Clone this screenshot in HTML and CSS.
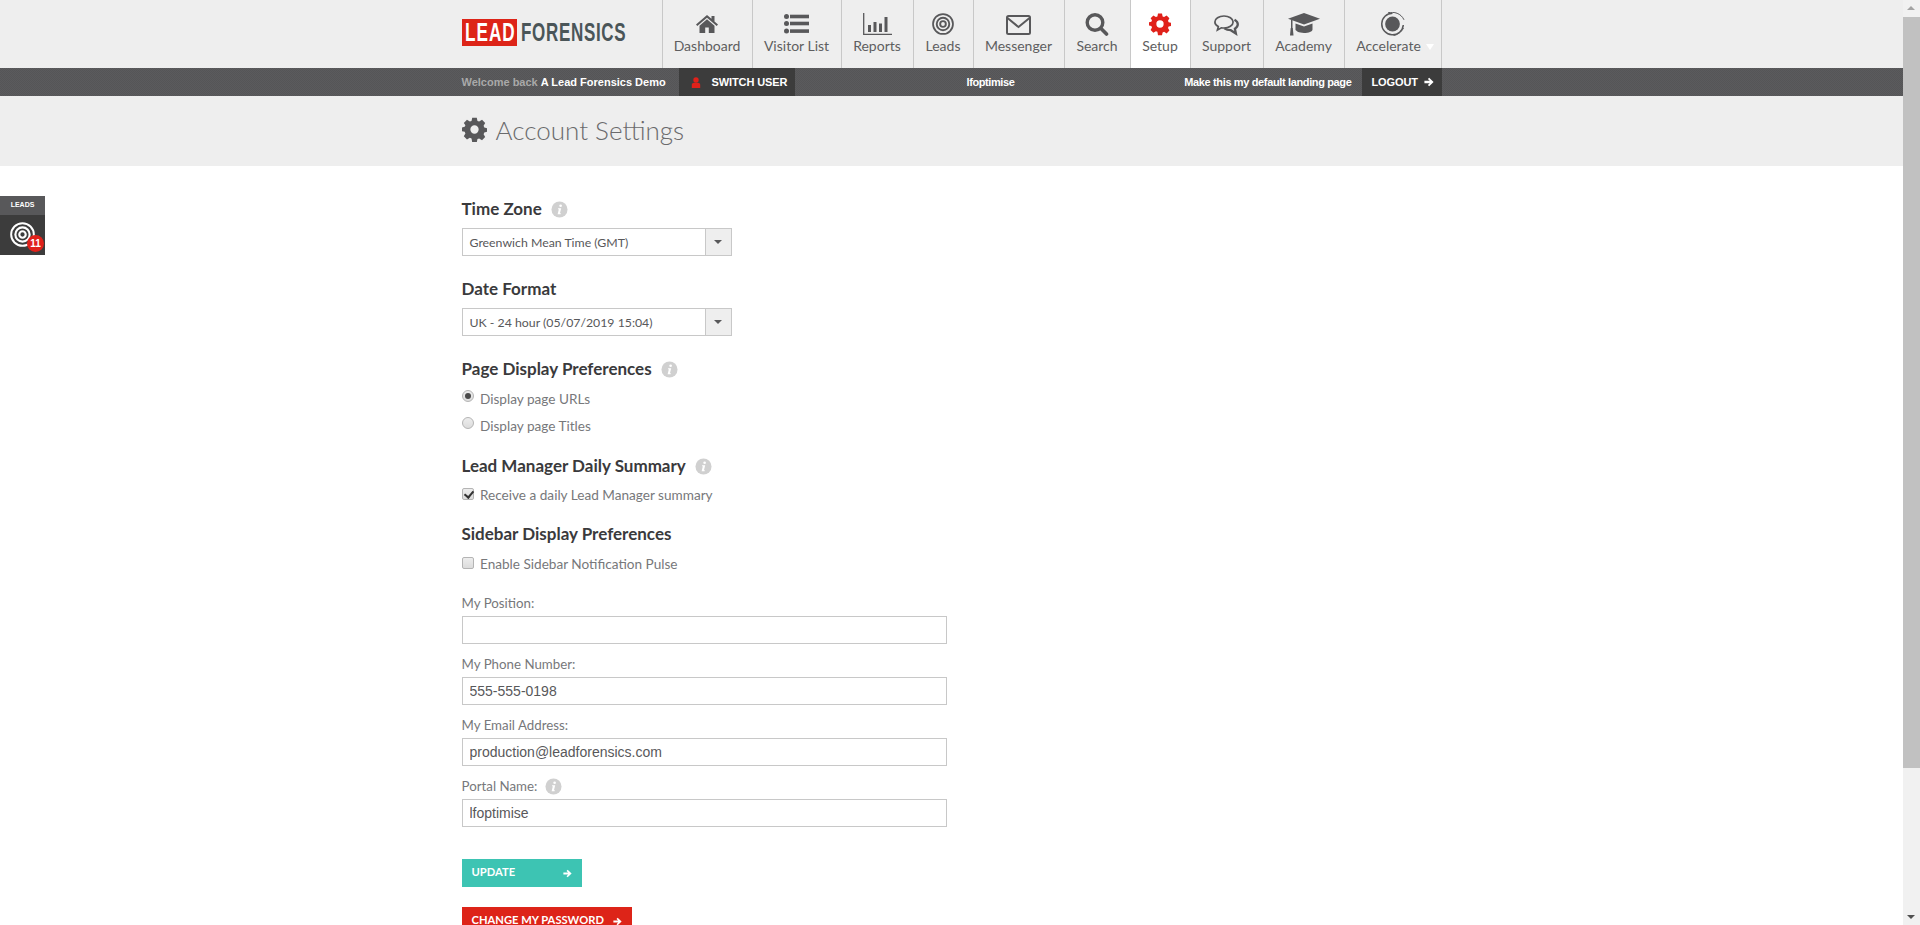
FILE: index.html
```html
<!DOCTYPE html>
<html lang="en">
<head>
<meta charset="utf-8">
<title>Account Settings</title>
<link rel="stylesheet" href="styles.css">
</head>
<body>
<svg class="defs" width="0" height="0" aria-hidden="true">
  <symbol id="gear" viewBox="0 0 24 24">
    <path fill="currentColor" fill-rule="evenodd" d="M9.7 0h4.6l.7 3.3 1.700.7 2.900-1.800 3.200 3.200L21.200 8.300l.7 1.700 3 .7v3.600l-3 .7-.7 1.700 1.600 2.900-3.200 3.200-2.900-1.800-1.700.7-.7 3.300H9.700L9 21l-1.700-.7-2.900 1.800-3.200-3.200L2.800 16l-.7-1.700-3-.7v-3.600l3-.7.7-1.700L1.200 5.400l3.200-3.200L7.300 4 9 3.300zM12 7.800a4.200 4.200 0 1 0 0 8.400a4.200 4.200 0 0 0 0-8.400z" transform="translate(.6 .6) scale(.95)"/>
  </symbol>
  <symbol id="arrow" viewBox="0 0 12 12">
    <path fill="currentColor" d="M6.200 1 11.500 6 6.200 11 4.700 9.500 6.900 7.400H.5V4.600h6.400L4.700 2.500z"/>
  </symbol>
  <symbol id="info" viewBox="0 0 18 18">
    <circle cx="9" cy="9" r="8.500" fill="#d0d0d0"/>
    <circle cx="10.200" cy="5" r="1.400" fill="#fff"/>
    <path fill="#fff" d="M7.600 7.800h3.200l-1.300 5.300h1l-.3 1H7l1.300-5.300h-1z"/>
  </symbol>
  <symbol id="target" viewBox="0 0 28 28">
    <circle cx="14" cy="14" r="12.700" fill="none" stroke="currentColor" stroke-width="2.200"/>
    <circle cx="14" cy="14" r="8" fill="none" stroke="currentColor" stroke-width="2.400"/>
    <circle cx="14" cy="14" r="3.600" fill="none" stroke="currentColor" stroke-width="2.400"/>
  </symbol>
</svg>

<div class="topnav">
  <div class="wrap topnav-inner">
    <a class="logo"><span class="logo-lead"><span>LEAD</span></span><span class="logo-rest"><span>FORENSICS</span></span></a>
    <nav class="menu">
      <a class="menu-item">
        <svg class="ico w22" viewBox="0 0 22 24"><g fill="#58585a"><path d="M11 3 0 12.400 1.300 14 11 5.700 20.700 14 22 12.400 18.500 9.400V4h-3v2.800z"/><path d="M11 7.300 3.500 13.700V21h5.700v-5.500h3.600V21h5.700v-7.300z"/></g></svg>
        <span>Dashboard</span>
      </a>
      <a class="menu-item">
        <svg class="ico w25" viewBox="0 0 25 24"><g fill="#58585a"><circle cx="2.500" cy="4.500" r="2.500"/><circle cx="2.500" cy="11.500" r="2.500"/><circle cx="2.500" cy="19" r="2.500"/><rect x="6" y="2.700" width="19" height="3.600"/><rect x="6" y="9.700" width="19" height="3.600"/><rect x="6" y="17.300" width="19" height="3.600"/></g></svg>
        <span>Visitor List</span>
      </a>
      <a class="menu-item">
        <svg class="ico w29" viewBox="0 0 29 24"><path fill="none" stroke="#58585a" stroke-width="1.300" d="M.7 1v21.400H29"/><g fill="#58585a"><rect x="5" y="13" width="3" height="7"/><rect x="10.500" y="10" width="3" height="10"/><rect x="16" y="11.500" width="3" height="8.500"/><rect x="21.500" y="5" width="3" height="15"/></g></svg>
        <span>Reports</span>
      </a>
      <a class="menu-item">
        <svg class="ico w22 target-ico"><use href="#target"/></svg>
        <span>Leads</span>
      </a>
      <a class="menu-item">
        <svg class="ico w25" viewBox="0 0 25 24"><rect x="1" y="4" width="23" height="18" rx="1.500" fill="none" stroke="#58585a" stroke-width="2"/><path fill="none" stroke="#58585a" stroke-width="2" d="M1.500 6 12.500 15 23.500 6"/></svg>
        <span>Messenger</span>
      </a>
      <a class="menu-item">
        <svg class="ico w24" viewBox="0 0 24 24"><circle cx="10" cy="10.500" r="7.800" fill="none" stroke="#58585a" stroke-width="3.400"/><path stroke="#58585a" stroke-width="3.600" stroke-linecap="round" d="M16 16.500l5.500 5.500"/></svg>
        <span>Search</span>
      </a>
      <a class="menu-item is-active">
        <svg class="ico w22 gear-red"><use href="#gear"/></svg>
        <span>Setup</span>
      </a>
      <a class="menu-item">
        <svg class="ico w25" viewBox="0 0 25 24"><path fill="none" stroke="#58585a" stroke-width="1.700" d="M10 4C4.900 4 .9 6.600.9 9.900c0 1.900 1.300 3.600 3.400 4.700L3.400 18l4-2.200c.8.100 1.700.2 2.600.2 5 0 9.100-2.700 9.100-6S15 4 10 4z"/><path fill="none" stroke="#58585a" stroke-width="2.300" d="M20.500 7.800c2 1.100 3.300 2.700 3.300 4.500 0 1.800-1.100 3.300-2.900 4.400l1 4.800-5.200-3.300c-2.500 0-4.700-.7-6.300-1.900"/></svg>
        <span>Support</span>
      </a>
      <a class="menu-item">
        <svg class="ico w32" viewBox="0 0 32 24"><g fill="#58585a"><path d="M16 1 32 6.700 16 12.400 0 6.700z"/><path d="M7.500 11.500 16 14.500l8.500-3v6c0 2-3.800 3.500-8.500 3.500-2.500 0-4.800-.5-6.300-1.200L7.500 18z"/><rect x="3" y="8" width="1.500" height="8.500"/><path d="M2.700 16h2.100l.7 7.500H2z"/></g></svg>
        <span>Academy</span>
      </a>
      <a class="menu-item">
        <svg class="ico w25" viewBox="0 0 25 24"><circle cx="12.500" cy="12" r="7.400" fill="#58585a"/><path fill="none" stroke="#58585a" stroke-width="1.500" d="M12.500 1.200A10.800 10.800 0 1 0 23.300 13"/><path fill="none" stroke="#58585a" stroke-width="1" d="M8 .8c6-1.500 13 .5 16 7M23.500 16c-2 4-6 7-10 7.500"/></svg>
        <span class="accel">Accelerate<i class="caret"></i></span>
      </a>
    </nav>
  </div>
</div>

<div class="userbar">
  <div class="wrap userbar-inner">
    <span class="welcome">Welcome back <b>A Lead Forensics Demo</b></span>
    <a class="dark-btn switch">
      <svg class="user-ico" viewBox="0 0 10 11"><circle cx="5" cy="3" r="2.700" fill="#e0211a"/><path fill="#e0211a" d="M.8 11V7.800C.8 6.500 2 5.800 3 5.800h4c1 0 2.200.7 2.200 2V11z"/></svg>
      SWITCH USER
    </a>
    <span class="portal">lfoptimise</span>
    <a class="landing">Make this my default landing page</a>
    <a class="dark-btn logout">LOGOUT <svg class="arrow"><use href="#arrow"/></svg></a>
  </div>
</div>

<header class="pagehead">
  <div class="wrap pagehead-inner">
    <svg class="title-gear"><use href="#gear"/></svg>
    <h1>Account Settings</h1>
  </div>
</header>

<aside class="leads-tab">
  <div class="leads-tab-head">LEADS</div>
  <div class="leads-tab-body">
    <svg class="leads-target"><use href="#target"/></svg>
    <span class="badge">11</span>
  </div>
</aside>

<main class="wrap content">
  <section class="group g-timezone">
    <h2>Time Zone <svg class="info"><use href="#info"/></svg></h2>
    <div class="select"><span>Greenwich Mean Time (GMT)</span><i class="select-btn"></i></div>
  </section>
  <section class="group g-date">
    <h2>Date Format</h2>
    <div class="select"><span>UK - 24 hour (05/07/2019 15:04)</span><i class="select-btn"></i></div>
  </section>
  <section class="group g-page">
    <h2>Page Display Preferences <svg class="info"><use href="#info"/></svg></h2>
    <label class="opt opt-radio"><input type="radio" name="display" checked> Display page URLs</label>
    <label class="opt opt-radio"><input type="radio" name="display"> Display page Titles</label>
  </section>
  <section class="group g-lead">
    <h2>Lead Manager Daily Summary <svg class="info"><use href="#info"/></svg></h2>
    <label class="opt"><input type="checkbox" checked> Receive a daily Lead Manager summary</label>
  </section>
  <section class="group g-side">
    <h2>Sidebar Display Preferences</h2>
    <label class="opt"><input type="checkbox"> Enable Sidebar Notification Pulse</label>
  </section>
  <section class="fields">
    <label class="field"><span class="field-label">My Position:</span><input type="text" value=""></label>
    <label class="field"><span class="field-label">My Phone Number:</span><input type="text" value="555-555-0198"></label>
    <label class="field"><span class="field-label">My Email Address:</span><input type="text" value="production@leadforensics.com"></label>
    <label class="field"><span class="field-label">Portal Name: <svg class="info"><use href="#info"/></svg></span><input type="text" value="lfoptimise"></label>
  </section>
  <a class="btn btn-update"><span>UPDATE</span> <svg class="arrow"><use href="#arrow"/></svg></a>
  <a class="btn btn-password"><span>CHANGE MY PASSWORD</span> <svg class="arrow"><use href="#arrow"/></svg></a>
</main>

<div class="scrollbar">
  <i class="sb-up"></i>
  <div class="sb-thumb"></div>
  <i class="sb-down"></i>
</div>
</body>
</html>
```

FILE: styles.css
```css
* { box-sizing: border-box; }
html, body { margin: 0; height: 925px; overflow: hidden; }
body {
  padding-right: 17px;
  background: #fff;
  color: #58585a;
  font-family: Lato, "Open Sans", sans-serif;
}
.defs { position: absolute; }
.wrap { width: 980px; margin: 0 auto; }
a { color: inherit; text-decoration: none; }

/* Top navigation */
.topnav { background: #eeeeee; height: 68px; }
.topnav-inner { display: flex; height: 68px; }
.logo { width: 200px; flex: none; display: flex; padding-top: 19px; height: 68px; }
.logo-lead {
  flex: none; width: 55px; height: 27px; background: #dd2418; color: #fff;
  font: bold 26px/27px "Liberation Sans", sans-serif; padding-left: 3px; white-space: nowrap;
}
.logo-lead span { display: inline-block; width: 72px; transform: scaleX(.66); transform-origin: left center; letter-spacing: 1.500px; }
.logo-rest {
  flex: none; padding-left: 4px; height: 27px; color: #4a5558; width: 112px;
  font: bold 25px/27px "Liberation Sans", sans-serif; white-space: nowrap;
}
.logo-rest span { display: inline-block; width: 155px; transform: scaleX(.68); transform-origin: left center; letter-spacing: 1px; }
.menu {
  display: grid;
  grid-template-columns: 90px 89px 72px 60px 91px 66px 60px 73px 81px 98px;
  flex: none;
}
.menu-item {
  border-left: 1px solid #c8c8c8;
  display: flex; flex-direction: column; align-items: center;
  padding-top: 12px; height: 68px;
  font-size: 14px; line-height: 18px; color: #5e5e60; white-space: nowrap;
}
.menu-item:last-child { border-right: 1px solid #c8c8c8; }
.menu-item.is-active { background: #fff; }
.ico { height: 24px; margin-bottom: 1px; flex: none; display: block; }
.w22 { width: 22px; }
.w24 { width: 24px; }
.w25 { width: 25px; }
.w29 { width: 29px; }
.w32 { width: 32px; }
.target-ico { color: #58585a; }
.gear-red { color: #e0211a; }
.accel { padding-left: 5px; }
.caret {
  display: inline-block; margin-left: 5px; vertical-align: middle;
  border: 4px solid transparent; border-top: 6px solid #fff; border-bottom: 0;
}

/* Dark user bar */
.userbar {
  height: 28px; color: #fff;
  background: repeating-conic-gradient(#5b5b5d 0 25%, #555557 0 50%) 0 0 / 2px 2px;
  font: bold 11px/28px "Liberation Sans", Arial, sans-serif;
}
.userbar-inner { display: flex; height: 28px; white-space: nowrap; }
.welcome { color: #a9a9a9; width: 217px; flex: none; }
.welcome b { color: #fff; }
.dark-btn { background: #3c3c3c; display: flex; align-items: center; flex: none; }
.switch { width: 116px; padding-left: 12px; gap: 11px; letter-spacing: -.1px; }
.user-ico { width: 10px; height: 11px; }
.portal { margin-left: 172px; letter-spacing: -.4px; }
.landing { margin-left: auto; margin-right: 10px; letter-spacing: -.36px; }
.logout { width: 80px; padding-left: 10px; letter-spacing: -.1px; }
.logout .arrow { margin-left: 6px; width: 10px; height: 10px; }
.arrow { width: 12px; height: 12px; color: #fff; flex: none; }

/* Page head */
.pagehead { background: #eeeeee; height: 70px; }
.pagehead-inner { display: flex; align-items: center; height: 68px; }
.title-gear { width: 25px; height: 25px; color: #58585a; flex: none; margin-bottom: 1px; }
h1 { margin: 0 0 0 9px; font-size: 26px; font-weight: 300; color: #6a6a6c; line-height: 30px; }

/* Floating leads tab */
.leads-tab { position: fixed; left: 0; top: 196px; width: 45px; height: 59px; }
.leads-tab-head {
  height: 19px; background: #58585a; color: #fff; text-align: center;
  font: bold 7px/17px "Liberation Sans", sans-serif;
}
.leads-tab-body { height: 40px; background: #3c3c3c; position: relative; }
.leads-target { position: absolute; left: 10px; top: 7px; width: 25px; height: 25px; color: #fff; }
.badge {
  position: absolute; left: 27px; top: 20px; width: 17px; height: 17px; border-radius: 50%;
  background: #e0211a; color: #fff; text-align: center;
  font: bold 10px/17px "Liberation Sans", sans-serif;
}

/* Form */
.content { padding-top: 33px; }
.group { width: 485px; }
h2 {
  margin: 0; font-size: 17px; line-height: 20px; font-weight: 700; color: #3a3a3c;
  display: flex; align-items: center; white-space: pre;
}
h2 .info { margin-left: 5px; }
.info { width: 17px; height: 17px; flex: none; }
.select {
  width: 270px; height: 28px; margin-top: 9px; border: 1px solid #c8c8c8;
  display: flex; align-items: center; justify-content: space-between;
  font-size: 12.300px; color: #58585a; padding-left: 7px; background: #fff;
}
.select-btn {
  width: 26px; height: 26px; background: #eeeeee; border-left: 1px solid #c8c8c8; position: relative; flex: none;
}
.select-btn::after {
  content: ""; position: absolute; left: 8px; top: 11px;
  border: 4px solid transparent; border-top: 4px solid #58585a; border-bottom: 0;
}
.g-date { margin-top: 23px; }
.g-page { margin-top: 23px; }
.g-lead { margin-top: 20px; }
.g-side { margin-top: 19px; }
.opt {
  display: flex; align-items: center; font-size: 13.600px; color: #77787b; height: 20px; white-space: pre;
}
.g-page h2 { margin-bottom: 10px; }
.opt-radio + .opt-radio { margin-top: 7px; }
.g-lead h2 { margin-bottom: 9px; }
.g-side h2 { margin-bottom: 10px; }
.opt input {
  appearance: none; -webkit-appearance: none;
  margin: 0 3px 3px 0; width: 12px; height: 12px; flex: none; position: relative;
  border: 1px solid #b4b4b4; border-radius: 2px;
  background: linear-gradient(#ededed, #dcdcdc);
}
.opt-radio input { border-radius: 50%; margin-bottom: 6px; }
.opt-radio input:checked::after {
  content: ""; position: absolute; left: 2px; top: 2px; width: 6px; height: 6px;
  border-radius: 50%; background: #4a4a4a;
}
.opt input[type="checkbox"]:checked::after {
  content: ""; position: absolute; left: 3px; top: 0; width: 4px; height: 7px;
  border: solid #333; border-width: 0 2px 2px 0; transform: rotate(40deg);
}

.fields { margin-top: 20px; width: 485px; display: flex; flex-direction: column; gap: 11px; }
.field { display: flex; flex-direction: column; }
.field-label {
  font-size: 13.300px; line-height: 18px; height: 18px; color: #77787b; margin-bottom: 4px;
  display: flex; align-items: center; gap: 8px;
}
.field input {
  height: 28px; border: 1px solid #c8c8c8; padding: 0 7px; width: 100%;
  font: 14px "Liberation Sans", Arial, sans-serif; color: #58585a; outline: 0; border-radius: 0;
}
.btn {
  display: flex; align-items: center; justify-content: space-between; white-space: nowrap;
  height: 28px; color: #fff; font-size: 11.200px; font-weight: 700; padding: 0 10px;
}
.btn > span { margin-top: -3px; }
.btn .arrow { width: 9px; height: 9px; }
.btn-update { width: 120px; background: #3dc4b3; margin-top: 32px; }
.btn-password { width: 170px; background: #dd2418; margin-top: 20px; }

/* Scrollbar drawn over the right edge */
.scrollbar {
  position: fixed; right: 0; top: 0; bottom: 0; width: 17px; background: #f1f1f1;
}
.sb-thumb { position: absolute; top: 17px; left: 0; right: 0; height: 751px; background: #c1c1c1; }
.sb-up, .sb-down { position: absolute; left: 4px; border: 4px solid transparent; border-top: 0; border-bottom: 4px solid #a3a3a3; }
.sb-up { top: 6px; }
.sb-down { bottom: 6px; border-bottom: 0; border-top: 4px solid #505050; }
```
